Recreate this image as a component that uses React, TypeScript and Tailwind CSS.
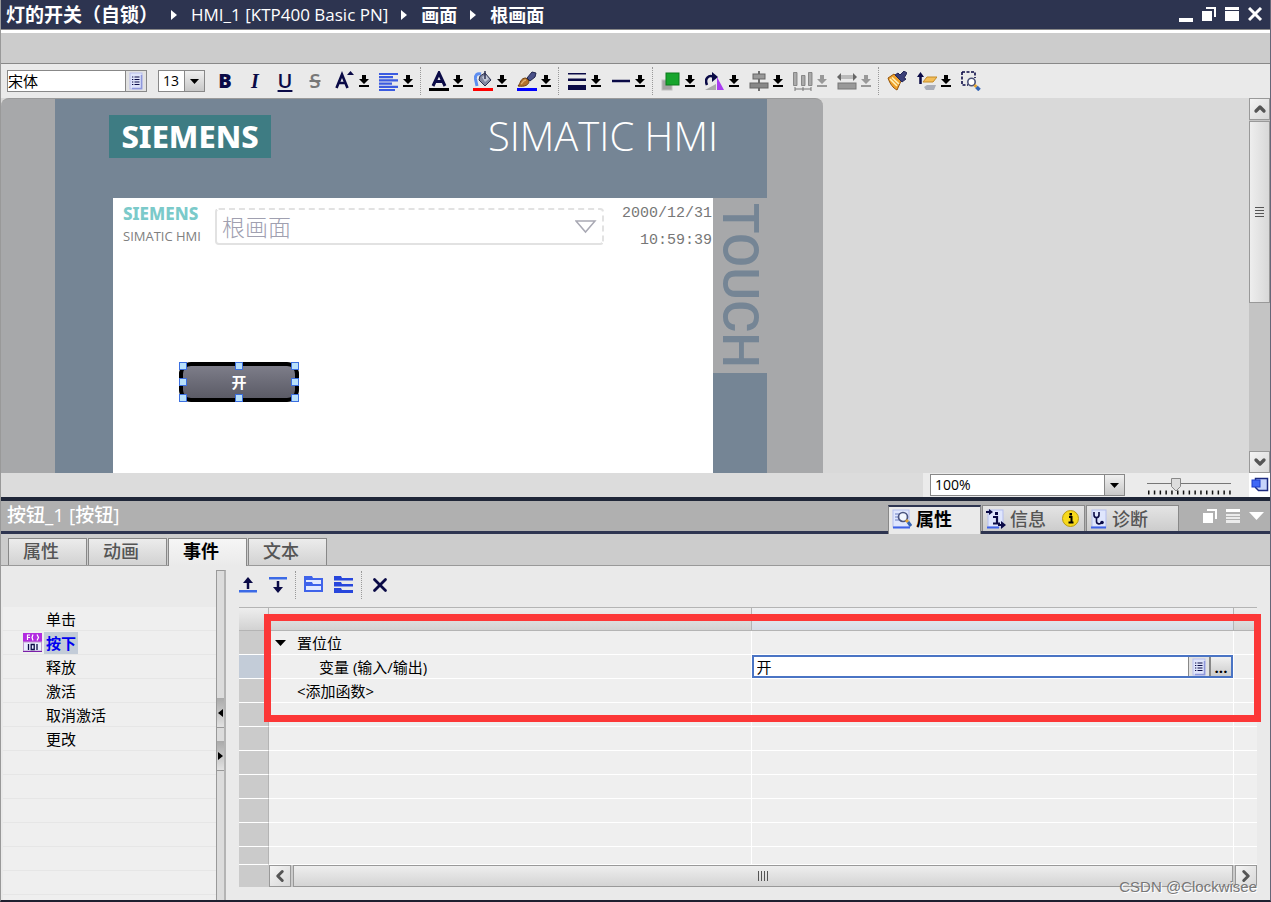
import { useState } from 'react';
import type { ReactNode } from 'react';
import clsx from 'clsx';
import {
  ChevronDown,
  ChevronLeft,
  ChevronRight,
  ChevronUp,
  X,
} from 'lucide-react';

type Tool = {
  label: string;
  icon: ReactNode;
  menu?: boolean;
  disabled?: boolean;
};

const NAVY = '#0a0a46';

function DownArrow({ disabled }: { disabled?: boolean }) {
  return (
    <svg
      width="10"
      height="14"
      viewBox="0 0 10 14"
      fill={disabled ? '#999' : '#000'}
    >
      <path d="M3 1h4v4h3L5 10 0 5h3z" />
      <rect y="11" width="10" height="2" />
    </svg>
  );
}

function Separator() {
  return (
    <div className="mx-[2px] h-7 w-[2px] self-center border-l border-dotted border-[#999]" />
  );
}

function ListIcon() {
  return (
    <svg width="14" height="18" viewBox="0 0 14 18">
      <rect x="1" y="1" width="12" height="16" fill="#dfe4fb" stroke="#b9c0ee" />
      <path d="M12.500 3v13.500H3" stroke="#8f98dc" fill="none" strokeWidth="1.500" />
      <path d="M3 5h1.300M3 7.500h1.300M3 10h1.300M3 12.500h1.300" stroke={NAVY} />
      <path d="M5.500 5h5M5.500 7.500h5M5.500 10h5M5.500 12.500h5" stroke={NAVY} strokeWidth="1.200" />
    </svg>
  );
}

function Triangle() {
  return (
    <svg width="7" height="12" viewBox="0 0 7 12" fill="#fff">
      <path d="M0 1l6 5-6 5z" />
    </svg>
  );
}

function Letter({ children, className }: { children: string; className: string }) {
  return (
    <span className={clsx('block w-5 text-center text-[20px] leading-5', className)}>
      {children}
    </span>
  );
}

const fontTools: Tool[] = [
  { label: '粗体', icon: <Letter className="font-extrabold">B</Letter> },
  {
    label: '斜体',
    icon: <Letter className="font-bold italic font-['Liberation_Serif',serif]">I</Letter>,
  },
  {
    label: '下划线',
    icon: <Letter className="font-semibold underline decoration-2 underline-offset-2">U</Letter>,
  },
  {
    label: '删除线',
    icon: <Letter className="font-semibold line-through decoration-2 text-[#777]">S</Letter>,
  },
  {
    label: '字号',
    menu: true,
    icon: (
      <svg width="20" height="20" viewBox="0 0 20 20" fill="none">
        <path d="M1.500 17L7 3.500 12.500 17M3.500 12h7" stroke={NAVY} strokeWidth="2.600" />
        <path d="M12 4l3.500-4L19 4z" fill={NAVY} />
      </svg>
    ),
  },
  {
    label: '对齐',
    menu: true,
    icon: (
      <svg width="20" height="20" viewBox="0 0 20 20" stroke="#3b5be0" strokeWidth="2.200">
        <path d="M0 3h19M0 6.200h14M0 9.400h19M0 12.600h13M0 15.800h19M0 19h16" />
      </svg>
    ),
  },
];

const colorTools: Tool[] = [
  {
    label: '字体颜色',
    menu: true,
    icon: (
      <svg width="20" height="20" viewBox="0 0 20 20" fill="none">
        <path d="M4 15l6-13 6 13M6.500 10.500h7" stroke={NAVY} strokeWidth="3" />
        <rect y="17" width="20" height="3" fill="#000" />
      </svg>
    ),
  },
  {
    label: '填充颜色',
    menu: true,
    icon: (
      <svg width="20" height="20" viewBox="0 0 20 20">
        <path d="M7 5l5-3 6 7-6 6-6-6z" fill="#8288a0" stroke="#2c3050" />
        <path d="M9 6l4-2 3 4-4 3z" fill="#c4c9d8" />
        <path d="M12 0v8" stroke="#2c3050" strokeWidth="1.500" />
        <path d="M8 3C4 2 2 4 2.500 8L4 15" stroke="#5d8df0" strokeWidth="3" fill="none" />
        <rect y="17" width="20" height="3" fill="#f00" />
      </svg>
    ),
  },
  {
    label: '线条颜色',
    menu: true,
    icon: (
      <svg width="20" height="20" viewBox="0 0 20 20">
        <path d="M1 15c3-3 2-8 8-8l3 3c0 4-4 6-11 5z" fill="#b4722c" stroke="#6f4314" />
        <path d="M4 13c2-1 2-4 5-4" stroke="#e2b070" strokeWidth="1.300" fill="none" />
        <path d="M10 7l5-6 4 1-1 4-5 4z" fill="#4a5188" stroke="#20254d" />
        <rect y="17" width="20" height="3" fill="#00f" />
      </svg>
    ),
  },
];

const lineTools: Tool[] = [
  {
    label: '线宽',
    menu: true,
    icon: (
      <svg width="20" height="20" viewBox="0 0 20 20" fill={NAVY}>
        <path d="M1 2h18v1.500H1zM1 7.500h18V10H1zM1 14h18v5H1z" />
      </svg>
    ),
  },
  {
    label: '线型',
    menu: true,
    icon: (
      <svg width="20" height="20" viewBox="0 0 20 20">
        <path d="M1 10h18" stroke={NAVY} strokeWidth="2.500" />
      </svg>
    ),
  },
];

const arrangeTools: Tool[] = [
  {
    label: '层次',
    menu: true,
    icon: (
      <svg width="20" height="20" viewBox="0 0 20 20">
        <rect x="1" y="9" width="10" height="10" fill="#a4a4a4" stroke="#c0c0c0" />
        <rect x="5" y="2" width="13" height="12" fill="#17a52d" stroke="#0c7a1c" />
      </svg>
    ),
  },
  {
    label: '旋转',
    menu: true,
    icon: (
      <svg width="20" height="20" viewBox="0 0 20 20">
        <path d="M0 19h11v-6z" fill="#aaa" />
        <path d="M12 19V6l7 13z" fill="#a93df0" />
        <path d="M2 14C-1 7 4 4 8 5.500" stroke={NAVY} strokeWidth="2.500" fill="none" />
        <path d="M7 1l6 5-6 5z" fill={NAVY} />
      </svg>
    ),
  },
  {
    label: '对齐对象',
    menu: true,
    icon: (
      <svg width="20" height="20" viewBox="0 0 20 20">
        <path d="M10 0v20" stroke="#444" strokeWidth="1.500" />
        <rect x="4" y="3" width="12" height="5" fill="#999" stroke="#666" />
        <rect x="1" y="12" width="18" height="5" fill="#888" stroke="#666" />
      </svg>
    ),
  },
  {
    label: '分布',
    menu: true,
    disabled: true,
    icon: (
      <svg width="20" height="20" viewBox="0 0 20 20" fill="#aaa" stroke="#777">
        <path d="M.5 1.500h3.500v13H.5zM8.500 4.500H12v10H8.500zM15.500 1.500H19v13h-3.500z" strokeWidth=".8" />
        <path d="M2 18h16M2 16v4M10 16v4M18 16v4" fill="none" />
      </svg>
    ),
  },
  {
    label: '大小',
    menu: true,
    disabled: true,
    icon: (
      <svg width="20" height="20" viewBox="0 0 20 20">
        <path d="M0 6l4-4v8zM20 6l-4-4v8z" fill="#666" />
        <rect x="4" y="4" width="12" height="4" fill="#bbb" />
        <rect x="1" y="12" width="18" height="6" fill="#999" stroke="#777" />
      </svg>
    ),
  },
];

const viewTools: Tool[] = [
  {
    label: '格式刷',
    icon: (
      <svg width="20" height="20" viewBox="0 0 20 20">
        <path d="M1 7l6-4 7 7-4 9C6 17 3 13 1 7z" fill="#f0a12a" stroke="#94560f" />
        <path d="M3 8l7 7M5 6.500l7 6.500" stroke="#fff2b8" strokeWidth="1.600" />
        <path d="M8 4l3-2 2 2 4-4 3 2-3 5 2 1-4 3z" fill="#3a3f78" stroke="#222655" />
      </svg>
    ),
  },
  {
    label: '图层',
    menu: true,
    icon: (
      <svg width="20" height="20" viewBox="0 0 20 20">
        <path d="M7 16l3-2h9l-2 5H9z" fill="#a9adb8" />
        <path d="M6 11l4-5h10l-4 5z" fill="#f3bd58" stroke="#c48b26" />
        <path d="M3.500 13V4" stroke={NAVY} strokeWidth="2.500" />
        <path d="M0 6l3.500-5L7 6z" fill={NAVY} />
      </svg>
    ),
  },
  {
    label: '选择缩放',
    icon: (
      <svg width="20" height="20" viewBox="0 0 20 20" fill="none">
        <path d="M1 1h13v6M1 1v13h6" stroke={NAVY} strokeWidth="1.600" strokeDasharray="3 1.500" />
        <circle cx="10.500" cy="11" r="3.700" fill="#fff" stroke="#4b5278" strokeWidth="1.600" />
        <path d="M13.500 14l2 2" stroke="#e5a52e" strokeWidth="3" />
        <path d="M15.500 16l3 3" stroke="#3464b4" strokeWidth="3.500" />
      </svg>
    ),
  },
];

function ToolGroup({ tools }: { tools: Tool[] }) {
  return (
    <>
      {tools.map((t) => (
        <button
          key={t.label}
          aria-label={t.label}
          disabled={t.disabled}
          className="flex items-center gap-1 px-[5px] text-[#0a0a46]"
        >
          {t.icon}
          {t.menu && <DownArrow disabled={t.disabled} />}
        </button>
      ))}
    </>
  );
}

function TitleBar() {
  const path = ['HMI_1 [KTP400 Basic PN]', '画面', '根画面'];

  return (
    <header className="flex h-[30px] items-center justify-between border-b border-[#888] bg-[#2d3450] pl-[5px] pr-[7px] text-white">
      <nav className="flex items-center gap-[13px] whitespace-nowrap text-[18px] font-semibold leading-6">
        <span className="text-[19px]">灯的开关（自锁）</span>
        {path.map((p, i) => (
          <span key={p} className="flex items-center gap-[13px]">
            <Triangle />
            <span className={clsx(i === 0 && 'text-[17px] font-medium')}>{p}</span>
          </span>
        ))}
      </nav>
      <div className="flex items-center gap-2">
        <button aria-label="最小化">
          <svg width="15" height="15" viewBox="0 0 15 15" fill="#fff">
            <rect y="11" width="14" height="4" />
          </svg>
        </button>
        <button aria-label="还原">
          <svg width="15" height="15" viewBox="0 0 15 15" fill="#fff">
            <path d="M0 4h10v10H0zM4 0h10v10h-2V2H4z" />
          </svg>
        </button>
        <button aria-label="最大化">
          <svg width="15" height="15" viewBox="0 0 15 15" fill="#fff">
            <path d="M0 0h14v3H0zM0 4h14v10H0z" />
          </svg>
        </button>
        <button aria-label="关闭">
          <svg width="15" height="15" viewBox="0 0 15 15" stroke="#fff" strokeWidth="3">
            <path d="M1 1l12 12M13 1L1 13" />
          </svg>
        </button>
      </div>
    </header>
  );
}

function ComboArrow() {
  return (
    <span className="pointer-events-none flex w-[20px] items-center justify-center border-l border-[#888] bg-linear-to-b from-[#f0f0f0] to-[#c8c8c8]">
      <svg width="9" height="5" viewBox="0 0 9 5">
        <path d="M0 0h9L4.500 5z" />
      </svg>
    </span>
  );
}

function Combo({ label, value, className }: { label: string; value: string; className: string }) {
  return (
    <div className={clsx('flex h-[22px] border border-[#888] bg-white', className)}>
      <select
        aria-label={label}
        defaultValue={value}
        className="min-w-0 flex-1 appearance-none bg-transparent px-1 text-[14px] leading-5 outline-none"
      >
        <option>{value}</option>
      </select>
      <ComboArrow />
    </div>
  );
}

function FormatBar() {
  return (
    <div className="flex h-[34px] items-stretch bg-[#eaeaea] pl-[6px]">
      <div className="flex items-center gap-[11px] pr-[5px]">
        <div className="flex h-[22px] w-[140px] border border-[#888] bg-white">
          <input
            aria-label="字体"
            defaultValue="宋体"
            className="min-w-0 flex-1 text-[15px] leading-5 outline-none"
          />
          <button
            aria-label="字体列表"
            className="flex w-[21px] items-center justify-center border-l border-[#888] bg-[#e2e2e2]"
          >
            <ListIcon />
          </button>
        </div>
        <Combo label="字号" value="13" className="w-[47px]" />
      </div>
      <div className="flex">
        <ToolGroup tools={fontTools} />
        <Separator />
        <ToolGroup tools={colorTools} />
        <Separator />
        <ToolGroup tools={lineTools} />
        <Separator />
        <ToolGroup tools={arrangeTools} />
        <Separator />
        <ToolGroup tools={viewTools} />
      </div>
    </div>
  );
}

const handles = [
  'left-0 top-0',
  'left-[56px] top-0',
  'right-0 top-0',
  'left-0 top-4',
  'right-0 top-4',
  'left-0 bottom-0',
  'left-[56px] bottom-0',
  'right-0 bottom-0',
];

function Device() {
  return (
    <div className="flex w-[822px] shrink-0 rounded-t-lg border-t border-[#9a9a9a] bg-[#a7a8aa] pl-[54px]">
      <div className="flex w-[712px] flex-col bg-[#758595]">
        <div className="flex h-[99px] shrink-0 items-start justify-between pl-[54px] pr-[49px] pt-4">
          <div className="flex h-[43px] w-[162px] items-center justify-center bg-[#3e7c83] font-['Noto_Sans',sans-serif] text-[31px] font-extrabold text-white">
            SIEMENS
          </div>
          <div className="font-['Open_Sans',sans-serif] text-[40px] font-light leading-[42px] text-white">
            SIMATIC HMI
          </div>
        </div>
        <div className="flex flex-1">
          <div className="relative ml-[58px] w-[600px] bg-white">
            <div className="flex items-start justify-between pl-[10px] pr-px pt-[6px]">
              <div className="w-[92px] whitespace-nowrap leading-[22px]">
                <div className="font-['Noto_Sans',sans-serif] text-[17px] font-extrabold leading-5 text-[#7bcaca]">
                  SIEMENS
                </div>
                <div className="text-[13px] leading-6 text-[#808080]">SIMATIC HMI</div>
              </div>
              <div className="mt-1 flex h-[37px] w-[389px] items-center justify-between rounded border-2 border-[#e2e2e2] px-[5px] text-[23px] font-light leading-8 text-[#a0a0b0] [border-right-style:dashed] [border-top-style:dashed]">
                根画面
                <svg width="22" height="14" viewBox="0 0 22 14" fill="#fff" stroke="#a9a9b4" strokeWidth="1.500">
                  <path d="M1 1h19l-9.500 11z" />
                </svg>
              </div>
              <div className="-mt-1 ml-auto text-right font-['Liberation_Mono',monospace] text-[15px] leading-[27px] text-[#777]">
                <div>2000/12/31</div>
                <div>10:59:39</div>
              </div>
            </div>
            <button className="absolute left-[66px] top-[164px] h-10 w-[120px] rounded-xl border-4 border-black bg-linear-to-b from-[#7d7d89] to-[#5b5b66] text-[15px] font-semibold leading-[30px] text-white">
              开
            </button>
            <div className="pointer-events-none absolute left-[66px] top-[164px] h-10 w-[120px]">
              {handles.map((h) => (
                <i key={h} className={clsx('absolute size-2 border border-[#3b6fe0] bg-[#b8e0fa]', h)} />
              ))}
            </div>
          </div>
          <div className="flex w-[54px] flex-col">
            <div className="flex h-[175px] items-center justify-center bg-[#a7a8aa] font-['Roboto',sans-serif] text-[50px] font-medium leading-[54px] text-[#758595] [writing-mode:vertical-rl]">
              TOUCH
            </div>
          </div>
        </div>
      </div>
    </div>
  );
}

const scrollButton =
  'flex shrink-0 items-center justify-center border border-[#999] bg-linear-to-br from-[#f4f4f4] to-[#d8d8d8] text-[#555]';

function Canvas() {
  return (
    <main className="flex min-h-[320px] flex-1 items-stretch bg-[#d9d9d9]">
      <Device />
      <div className="ml-auto flex w-[21px] flex-col bg-[#c4c4c4]">
        <button aria-label="向上" className={clsx(scrollButton, 'h-[22px]')}>
          <ChevronUp size={16} strokeWidth={5} />
        </button>
        <div className="mt-px flex h-[182px] items-center justify-center border border-[#999] bg-linear-to-r from-[#eee] to-[#d8d8d8]">
          <svg width="9" height="10" viewBox="0 0 9 10" stroke="#555">
            <path d="M0 .5h9M0 3.500h9M0 6.500h9M0 9.500h9" />
          </svg>
        </div>
        <button aria-label="向下" className={clsx(scrollButton, 'mt-auto h-[22px]')}>
          <ChevronDown size={16} strokeWidth={5} />
        </button>
      </div>
    </main>
  );
}

function ZoomBar() {
  const [zoom, setZoom] = useState(35);

  return (
    <div className="flex h-6 items-center justify-end bg-[#dcdcdc]">
      <div className="flex h-full items-center gap-[22px] bg-[#ebebeb] pl-[7px]">
        <Combo label="缩放" value="100%" className="w-[195px]" />
        <label className="relative block h-5 w-[84px]">
          <svg width="84" height="20" viewBox="0 0 84 20">
            <path d="M0 8.500h84" stroke="#777" />
            <path d="M1 17.500h83" stroke="#111" strokeWidth="4" strokeDasharray="1.500 4.300" />
            <path d="M24.500 3.500h9v8L29 16l-4.500-4.500z" fill="#ddd" stroke="#888" />
          </svg>
          <input
            type="range"
            aria-label="缩放比例"
            value={zoom}
            onChange={(e) => setZoom(Number(e.target.value))}
            className="absolute inset-0 w-full opacity-0"
          />
        </label>
        <button aria-label="适合窗口" className="-ml-1 flex h-full w-[21px] items-center justify-center bg-white">
          <svg width="18" height="18" viewBox="0 0 18 18">
            <path d="M4.500 2.500h12v12h-9l-3-3z" fill="#c6d3fb" stroke="#1c2a80" strokeWidth="1.500" />
            <rect x="1" y="4" width="8" height="7" fill="#3f67f5" stroke="#1c3cc8" />
          </svg>
        </button>
      </div>
    </div>
  );
}

function PropertyIcon() {
  return (
    <svg width="20" height="20" viewBox="0 0 20 20">
      <rect x="1" y="1" width="16" height="17" fill="#dfe6fd" stroke="#b3bdee" />
      <path d="M1 18.500h17" stroke="#3f63e8" strokeWidth="2" />
      <path d="M3 5h4M3 8h4M3 11h4" stroke="#6b7fc4" />
      <circle cx="11" cy="8" r="4.500" fill="#f2f6ff" stroke="#4b5580" strokeWidth="1.700" />
      <path d="M14 11l2 2" stroke="#e5a52e" strokeWidth="3" />
      <path d="M16 13l3 4" stroke="#3464b4" strokeWidth="3" />
    </svg>
  );
}

function InfoIcon() {
  return (
    <svg width="20" height="20" viewBox="0 0 20 20">
      <rect x="2" y="1" width="15" height="17" fill="#dfe6fd" stroke="#b3bdee" />
      <path d="M1 18.500h12" stroke="#3f63e8" strokeWidth="2" />
      <path d="M7 8h4v6M7 14.500h7" stroke={NAVY} strokeWidth="2.200" fill="none" />
      <rect x="9" y="3" width="3" height="3" fill={NAVY} />
      <path d="M0 3h4M12 16h4" stroke={NAVY} strokeWidth="2" />
      <path d="M3 0l4 3-4 3zM15 12l5 4-5 4z" fill={NAVY} />
    </svg>
  );
}

function DiagnoseIcon() {
  return (
    <svg width="18" height="20" viewBox="0 0 18 20" fill="none">
      <rect x="2" y="1" width="14" height="17" fill="#dfe6fd" stroke="#b3bdee" />
      <path d="M1 18.500h15" stroke="#3f63e8" strokeWidth="2" />
      <path d="M4 3v3c0 3.500 5 3.500 5 0V3M6.500 8.500v4c0 3 4 3 5 1" stroke={NAVY} strokeWidth="1.600" />
      <circle cx="12" cy="13.500" r="1.800" fill={NAVY} />
    </svg>
  );
}

const inspectorTabs = [
  { label: '属性', icon: <PropertyIcon />, width: 'w-[93px]', active: true },
  { label: '信息', icon: <InfoIcon />, width: 'w-[103px]', badge: true },
  { label: '诊断', icon: <DiagnoseIcon />, width: 'w-[93px]' },
];

function InspectorHeader() {
  return (
    <div className="flex h-[37px] items-stretch border-b-[3px] border-t-4 border-b-[#2d3450] border-t-[#1f2638] bg-[#b0b0b0]">
      <h2 className="flex-1 pl-[6px] text-[19px] font-medium leading-7 text-white">按钮_1 [按钮]</h2>
      <div className="flex gap-px pt-1">
        {inspectorTabs.map((t) => (
          <button
            key={t.label}
            className={clsx(
              'flex items-center gap-1 border-l border-r border-[#888] px-[3px] text-[18px] leading-6',
              t.width,
              t.active
                ? '-mb-[3px] border-t-2 border-t-[#2d3450] bg-[#eaeaea] pb-[3px] font-bold text-black'
                : 'border-t bg-linear-to-b from-[#e4e4e4] to-[#ccc] font-medium text-[#555]',
            )}
          >
            {t.icon}
            {t.label}
            {t.badge && (
              <svg className="ml-auto mr-[2px]" width="17" height="17" viewBox="0 0 17 17">
                <circle cx="8.500" cy="8.500" r="8" fill="#f7d91c" stroke="#b89a10" />
                <path d="M7 7h2.500v5M6.500 12.500h5" stroke="#000" strokeWidth="2" fill="none" />
                <rect x="7.500" y="3" width="2.500" height="2.500" />
              </svg>
            )}
          </button>
        ))}
      </div>
      <div className="flex items-center gap-2 pl-6 pr-[6px]">
        <button aria-label="浮动">
          <svg width="15" height="15" viewBox="0 0 15 15" fill="#fff">
            <path d="M0 4h10v10H0zM4 0h10v10h-2V2H4z" />
          </svg>
        </button>
        <button aria-label="列表">
          <svg width="15" height="15" viewBox="0 0 15 15" fill="#fff">
            <path d="M0 0h14v3H0z" />
            <path d="M0 5h14v2H0zM0 8h14v2H0zM0 11h14v3H0z" opacity=".75" />
          </svg>
        </button>
        <button aria-label="折叠">
          <svg width="15" height="8" viewBox="0 0 15 8" fill="#fff">
            <path d="M0 0h15L7.500 8z" />
          </svg>
        </button>
      </div>
    </div>
  );
}

const pageTabs = ['属性', '动画', '事件', '文本'];

function PageTabs() {
  const [active, setActive] = useState('事件');

  return (
    <div className="flex h-8 items-end gap-px border-b border-[#999] bg-[#ccc] pl-[7px]">
      {pageTabs.map((t) => (
        <button
          key={t}
          onClick={() => setActive(t)}
          className={clsx(
            'w-[79px] border-l border-r border-t border-[#888] pl-[14px] text-left text-[18px] leading-6',
            t === active
              ? '-mb-px h-[28px] bg-linear-to-b from-[#f6f6f6] to-[#eaeaea] pb-[3px] font-bold text-black'
              : 'h-[27px] bg-linear-to-b from-[#ececec] to-[#d2d2d2] pb-[2px] font-medium text-[#555]',
          )}
        >
          {t}
        </button>
      ))}
    </div>
  );
}

const events = ['单击', '按下', '释放', '激活', '取消激活', '更改'];

function EventTree() {
  return (
    <ul className="overflow-hidden pl-[2px] pt-[41px] text-[15px] leading-[23px]">
      {[...events, '', '', '', '', '', '', ''].map((e, i) => (
        <li key={i} className="flex h-6 items-center border-b border-[#e6e6e6] bg-[#efefef] pl-5">
          <span className="flex w-[21px] shrink-0">
            {e === '按下' && (
              <svg width="19" height="19" viewBox="0 0 19 19" fill="none">
                <rect width="19" height="9" fill="#b22be0" />
                <rect x=".5" y="9" width="18" height="9" fill="#e9edff" stroke="#b9c" />
                <path d="M4.500 7V2H7M4.500 4.500H7M10 1.500L9 4.500l1 3M14 1.500l1.500 3-1.500 3" stroke="#fff" strokeWidth="1.200" />
                <path d="M5.500 11v6M14 11v6M8.200 11.500h3v5h-3z" stroke={NAVY} strokeWidth="1.300" />
                <path d="M0 18.500h19" stroke="#7a1fa8" />
              </svg>
            )}
          </span>
          <button
            className={clsx(
              'px-[2px] leading-[22px]',
              e === '按下' && 'bg-[#c3ccd8] font-bold text-[#0000f0]',
            )}
          >
            {e}
          </button>
        </li>
      ))}
    </ul>
  );
}

function Splitter() {
  return (
    <div className="mt-1 flex w-[10px] shrink-0 flex-col border-l border-r-2 border-t border-[#999] border-r-[#b4b4b4] bg-[#dcdcdc] pt-[127px]">
      <button aria-label="收起" className="flex h-[30px] items-center border-b border-[#999] bg-linear-to-b from-[#aaa] to-[#e2e2e2]">
        <svg width="6" height="8" viewBox="0 0 6 8">
          <path d="M6 0v8L1 4z" />
        </svg>
      </button>
      <button aria-label="展开" className="mt-[13px] flex h-[30px] items-center border-b border-[#999] bg-linear-to-b from-[#aaa] to-[#e2e2e2]">
        <svg width="6" height="8" viewBox="0 0 6 8">
          <path d="M1 0v8l5-4z" />
        </svg>
      </button>
    </div>
  );
}

const moveTools: Tool[] = [
  {
    label: '上移',
    icon: (
      <svg width="20" height="20" viewBox="0 0 20 20">
        <path d="M10 14V5" stroke={NAVY} strokeWidth="2.500" />
        <path d="M5 8l5-6 5 6z" fill={NAVY} />
        <rect x="1" y="15" width="18" height="2.500" fill="#3b6ae6" />
      </svg>
    ),
  },
  {
    label: '下移',
    icon: (
      <svg width="20" height="20" viewBox="0 0 20 20">
        <rect x="1" y="2" width="18" height="2.500" fill="#3b6ae6" />
        <path d="M10 6v9" stroke={NAVY} strokeWidth="2.500" />
        <path d="M5 12l5 6 5-6z" fill={NAVY} />
      </svg>
    ),
  },
];

const groupTools: Tool[] = [
  {
    label: '展开全部',
    icon: (
      <svg width="20" height="20" viewBox="0 0 20 20">
        <path d="M0 1h8l1 2h10v14H0z" fill="#3f63ea" />
        <path d="M2 5h15v4H9L8 7H2zM2 11h15v4H2z" fill="#e3eaff" />
      </svg>
    ),
  },
  {
    label: '折叠全部',
    icon: (
      <svg width="20" height="20" viewBox="0 0 20 20" fill="#2746dc">
        <path d="M0 1h7l1 2h11v2.500H0zM0 7h7l1 2h11v2.500H0zM0 13h7l1 2h11v3H0z" />
      </svg>
    ),
  },
];

const deleteTools: Tool[] = [
  { label: '删除', icon: <X size={22} strokeWidth={3} className="-mx-px" /> },
];

const headCell = 'border-y border-r border-[#b4b4b4] bg-linear-to-b from-[#eee] to-[#d2d2d2] p-0';
const cell = 'border-b border-r border-white p-0';

function FunctionTable() {
  return (
    <table className="w-full table-fixed border-separate border-spacing-0 bg-[#efefef] text-[15px] leading-[22px]">
      <colgroup>
        <col className="w-[30px]" />
        <col />
        <col />
        <col className="w-[23px]" />
      </colgroup>
      <thead>
        <tr className="h-6">
          <th className={headCell} />
          <th className={headCell} />
          <th className="border-y border-r border-[#b4b4b4] bg-linear-to-b from-[#f0f1f3] to-[#d6dce6] p-0" />
          <th className="border-y border-[#b4b4b4] bg-linear-to-b from-[#eee] to-[#d2d2d2] p-0" />
        </tr>
      </thead>
      <tbody>
        {Array.from({ length: 10 }, (_, i) => (
          <tr key={i} className={i === 9 ? 'h-[18px]' : 'h-6'}>
            <td
              className={clsx(
                'border-b border-r border-b-white border-r-[#b4b4b4] p-0',
                i === 1 ? 'bg-[#c3ccd8]' : 'bg-[#cbcbcb]',
              )}
            />
            <td className={cell}>
              {i === 0 && (
                <button className="flex items-center gap-[11px] pl-[6px]">
                  <svg width="11" height="6" viewBox="0 0 11 6">
                    <path d="M0 0h11L5.500 6z" />
                  </svg>
                  置位位
                </button>
              )}
              {i === 1 && (
                <label htmlFor="variable" className="block pl-[50px]">
                  变量 (输入/输出)
                </label>
              )}
              {i === 2 && <button className="pl-7">&lt;添加函数&gt;</button>}
            </td>
            <td className={cell}>
              {i === 1 && (
                <div className="flex h-[23px] border-2 border-[#4a74c4] bg-white">
                  <input
                    id="variable"
                    defaultValue="开"
                    className="min-w-0 flex-1 px-[3px] text-[15px] outline-none"
                  />
                  <button
                    aria-label="变量列表"
                    className="flex w-[21px] items-center justify-center border-l border-[#888] bg-[#e2e2e2]"
                  >
                    <ListIcon />
                  </button>
                  <button
                    aria-label="浏览"
                    className="w-[22px] border-l-2 border-[#888] bg-linear-to-b from-[#f0f0f0] to-[#ccc] font-bold leading-[18px]"
                  >
                    ...
                  </button>
                </div>
              )}
            </td>
            <td className="border-b border-white p-0" />
          </tr>
        ))}
      </tbody>
    </table>
  );
}

function FunctionEditor() {
  return (
    <section className="flex-1 pb-[13px] pl-[13px] pr-[13px]">
      <div className="-ml-[6px] flex h-[41px] items-stretch pb-1">
        <ToolGroup tools={moveTools} />
        <Separator />
        <ToolGroup tools={groupTools} />
        <Separator />
        <ToolGroup tools={deleteTools} />
      </div>
      <div className="relative">
        <FunctionTable />
        <div className="flex h-[22px] bg-[#cbcbcb]">
          <div className="w-[30px]" />
          <button aria-label="向左" className={clsx(scrollButton, 'w-[22px]')}>
            <ChevronLeft size={18} strokeWidth={4} />
          </button>
          <div className="mx-[2px] flex flex-1 items-center justify-center border border-[#999] bg-linear-to-b from-[#eee] to-[#d4d4d4]">
            <svg width="10" height="10" viewBox="0 0 10 10" stroke="#555">
              <path d="M.5 0v10M3.500 0v10M6.500 0v10M9.500 0v10" />
            </svg>
          </div>
          <button aria-label="向右" className={clsx(scrollButton, 'w-[22px]')}>
            <ChevronRight size={18} strokeWidth={4} />
          </button>
        </div>
        <div className="pointer-events-none absolute -right-1 left-[25px] top-[7px] h-[108px] border-[7px] border-[#fc3737]" />
        <span className="absolute -bottom-2 right-0 font-['Liberation_Sans',sans-serif] text-[15px] leading-4 text-[#777] [text-shadow:1px_1px_0_#fff]">
          CSDN @Clockwisee
        </span>
      </div>
    </section>
  );
}

export default function App() {
  return (
    <div className="flex min-h-screen flex-col border-x border-b-2 border-b-[#1f2030] border-l-[#999] border-r-[#667] bg-[#eaeaea] font-['Open_Sans','Noto_Sans_CJK_SC',sans-serif] text-black">
      <TitleBar />
      <div className="h-[34px] border-b border-t-[3px] border-b-[#888] border-t-white bg-[#ccc]" />
      <FormatBar />
      <Canvas />
      <ZoomBar />
      <InspectorHeader />
      <PageTabs />
      <div className="flex">
        <div className="relative w-[215px] shrink-0 overflow-hidden">
          <div className="absolute inset-0">
            <EventTree />
          </div>
        </div>
        <Splitter />
        <FunctionEditor />
      </div>
    </div>
  );
}
